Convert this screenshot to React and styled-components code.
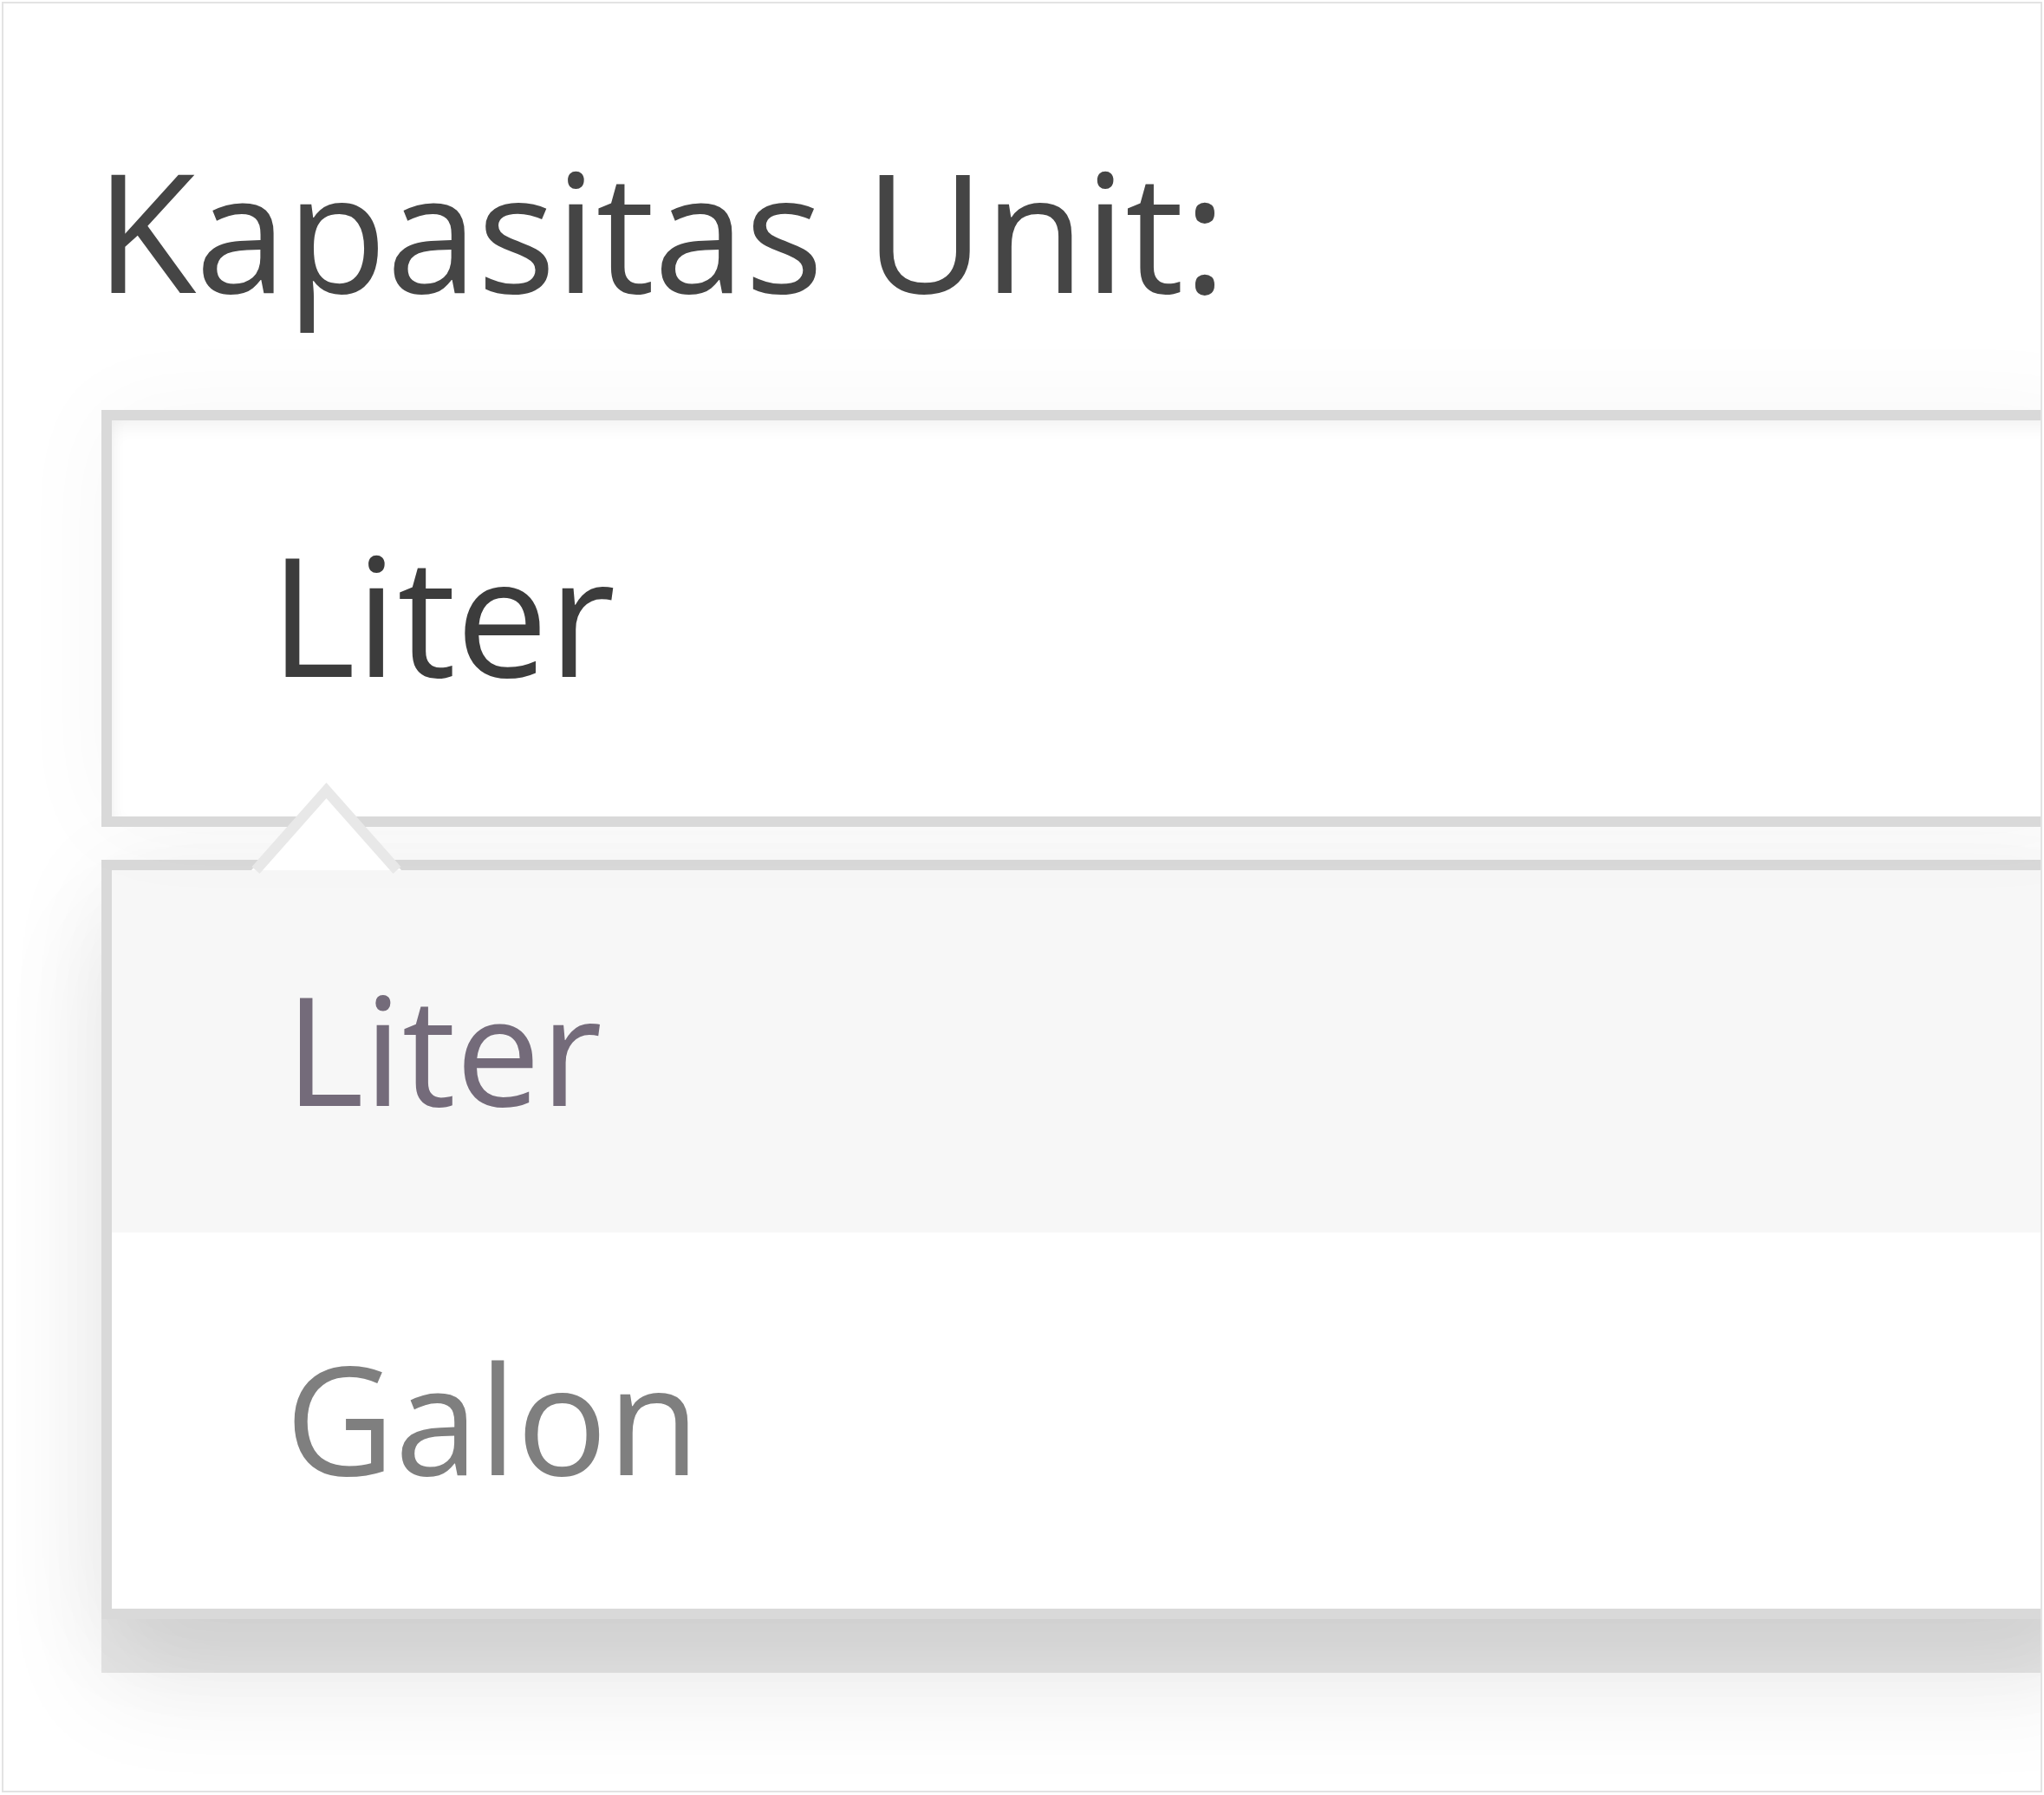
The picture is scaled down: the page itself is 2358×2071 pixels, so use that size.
import React, { useState } from "react";
import styled, { createGlobalStyle } from "styled-components";

const GlobalStyle = createGlobalStyle`
  html, body {
    margin: 0;
    padding: 0;
    background: #fff;
  }
  body {
    font-family: "Open Sans", "Liberation Sans", sans-serif;
  }
`;

const PanelStyled = styled.div`
  box-sizing: border-box;
  width: 2354px;
  height: 2066px;
  margin: 2px 0 0 2px;
  border: 2px solid #e3e3e3;
  background: #fff;
  overflow: hidden;
  padding: 161px 0 0 113px;
`;

const LabelStyled = styled.p`
  margin: 0 0 108px -7px;
  font-size: 190px;
  line-height: 200px;
  font-weight: 400;
  letter-spacing: -0.8px;
  color: #454545;
  white-space: nowrap;
`;

const SelectBoxStyled = styled.div`
  position: relative;
  z-index: 1;
  box-sizing: border-box;
  width: calc(100% + 60px);
  height: 481px;
  margin-bottom: 38px;
  display: flex;
  align-items: center;
  padding: 0 0 12px 182px;
  border: 12px solid #d9d9d9;
  background: #fff;
  box-shadow: inset 0 12px 20px -4px rgba(0, 0, 0, 0.05),
    inset 12px 0 16px -8px rgba(0, 0, 0, 0.03),
    0 0 110px rgba(0, 0, 0, 0.035);
  font-size: 190px;
  color: #3c3c3c;
  cursor: pointer;
`;

const DropdownStyled = styled.ul`
  position: relative;
  box-sizing: border-box;
  width: calc(100% + 60px);
  margin: 0;
  padding: 0;
  list-style: none;
  border: 12px solid #d9d9d9;
  background: #fff;
  box-shadow: 0 62px 0 0 rgba(0, 0, 0, 0.09),
    0 80px 120px rgba(0, 0, 0, 0.07),
    0 20px 120px rgba(0, 0, 0, 0.06);
`;

const ArrowStyled = styled.svg`
  position: absolute;
  z-index: 3;
  top: -99px;
  left: 161px;
  width: 173px;
  height: 99px;
  overflow: visible;
`;

const OptionStyled = styled.li`
  box-sizing: border-box;
  height: ${(props) => props.$height}px;
  display: flex;
  align-items: center;
  padding: 0 0 10px 200px;
  font-size: 174px;
  color: ${(props) => (props.$active ? "#746b7a" : "#7f7f7f")};
  background-color: ${(props) => (props.$active ? "#f7f7f7" : "#fff")};
  cursor: pointer;
`;

const units = [
  { name: "Liter", height: 418 },
  { name: "Galon", height: 434 },
];

export default function App() {
  const [unit, setUnit] = useState("Liter");
  const [open, setOpen] = useState(true);

  return (
    <>
      <GlobalStyle />
      <PanelStyled>
        <LabelStyled>Kapasitas Unit:</LabelStyled>
        <SelectBoxStyled onClick={() => setOpen(!open)}>{unit}</SelectBoxStyled>
        {open && (
          <DropdownStyled>
            <ArrowStyled viewBox="0 0 173 99">
              <polygon points="0,99 86.5,0 173,99" fill="#fff" />
              <polyline
                points="5,99 86.5,7 168,99"
                fill="none"
                stroke="#e8e8e8"
                strokeWidth="12"
              />
            </ArrowStyled>
            {units.map((u) => (
              <OptionStyled
                key={u.name}
                $height={u.height}
                $active={u.name === unit}
                onClick={() => setUnit(u.name)}
              >
                {u.name}
              </OptionStyled>
            ))}
          </DropdownStyled>
        )}
      </PanelStyled>
    </>
  );
}
